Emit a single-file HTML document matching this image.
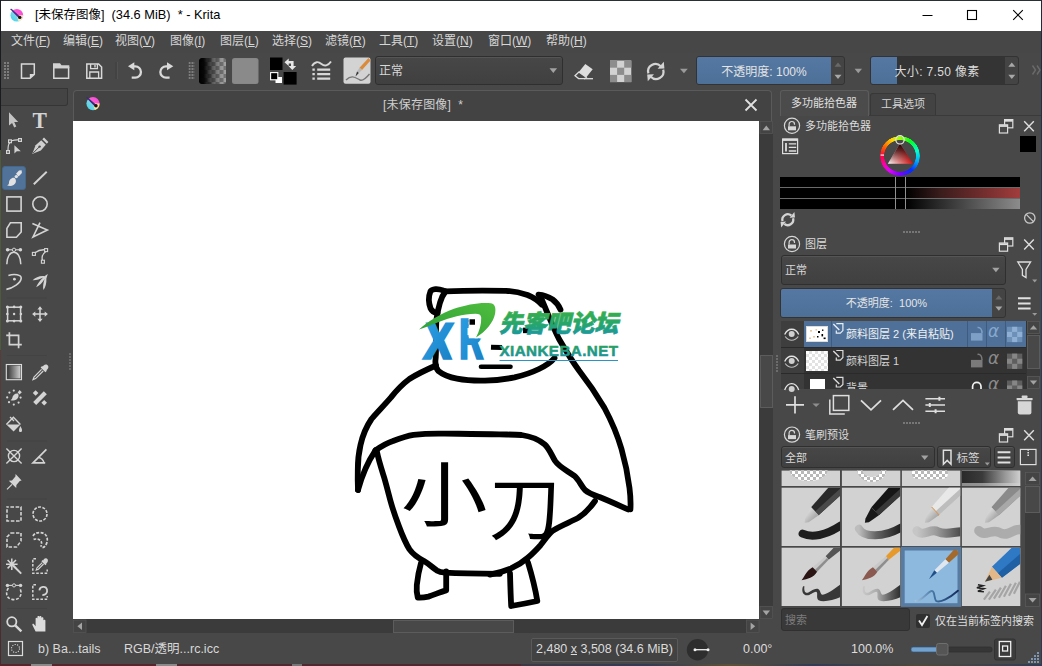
<!DOCTYPE html>
<html lang="zh-CN">
<head>
<meta charset="utf-8">
<title>Krita</title>
<style>
*{box-sizing:border-box;margin:0;padding:0}
html,body{width:1042px;height:666px;overflow:hidden;background:#3a2a2a}
body{position:relative;font-family:"Liberation Sans","Noto Sans CJK SC",sans-serif;font-size:12px;color:#d2d2d2}
.abs{position:absolute}
#win{position:absolute;left:0;top:0;width:1042px;height:666px;background:#484848;overflow:hidden}
#titlebar{position:absolute;left:1px;top:1px;width:1040px;height:30px;background:#fff;color:#000}
#title{position:absolute;left:34px;top:3px;font-size:12.5px;letter-spacing:.15px;white-space:pre;color:#000;letter-spacing:0}
#menubar{position:absolute;left:1px;top:31px;width:1040px;height:22px;background:#474747}
#menubar span{position:absolute;top:2px;line-height:16px;font-size:12px;color:#d6d6d6;white-space:nowrap}
#menubar u{text-decoration:underline;text-underline-offset:1px}
#toolbar{position:absolute;left:0;top:0;width:1042px;height:88px}
svg{position:absolute;overflow:visible}
.t{position:absolute;white-space:nowrap;line-height:16px;height:16px}
.combo{border:1px solid #2f2f2f;border-radius:3px;background:linear-gradient(#474747,#404040);box-shadow:inset 0 1px 0 #555}
</style>
</head>
<body>
<div id="win">
  <!-- TITLE BAR -->
  <div id="titlebar">
    <div id="title">[未保存图像]<span style="font-size:12.800px;letter-spacing:0">  (34.6 MiB)  * - Krita</span></div>
    <svg width="1040" height="30" viewBox="1 1 1040 30" style="left:0;top:0">
      <defs><linearGradient id="kg1" x1="0" y1="1" x2="1" y2="0"><stop offset="0" stop-color="#3ad0e8"/><stop offset=".45" stop-color="#7ad8e8"/><stop offset=".55" stop-color="#ff60d0"/><stop offset="1" stop-color="#f040e0"/></linearGradient></defs>
      <circle cx="16.800" cy="15.200" r="6.300" fill="url(#kg1)"/>
      <path d="M16.800,15.200 L23.100,15.200 A6.300,6.300 0 0 1 18.400,21.300 Z" fill="#fff4c0" opacity=".9"/>
      <path d="M10,9 L11.500,8.800 L20,16.400 L18.600,18 Z" fill="#4a2a8a"/>
      <circle cx="19.800" cy="17.400" r="1.700" fill="#151515"/>
      <path d="M922.500,15.500 H932.500" stroke="#000" stroke-width="1"/>
      <rect x="967.500" y="10.500" width="9" height="9" fill="none" stroke="#000" stroke-width="1.100"/>
      <path d="M1013.200,10.200 L1022.800,19.800 M1022.800,10.200 L1013.200,19.800" stroke="#000" stroke-width="1.100"/>
    </svg>
  </div>
  <!-- MENU BAR -->
  <div id="menubar">
    <span style="left:10px">文件(<u>F</u>)</span>
    <span style="left:62px">编辑(<u>E</u>)</span>
    <span style="left:114px">视图(<u>V</u>)</span>
    <span style="left:169px">图像(<u>I</u>)</span>
    <span style="left:219px">图层(<u>L</u>)</span>
    <span style="left:271px">选择(<u>S</u>)</span>
    <span style="left:324px">滤镜(<u>R</u>)</span>
    <span style="left:378px">工具(<u>T</u>)</span>
    <span style="left:431px">设置(<u>N</u>)</span>
    <span style="left:487px">窗口(<u>W</u>)</span>
    <span style="left:545px">帮助(<u>H</u>)</span>
  </div>
  <!-- TOOLBAR -->
  <div id="toolbar">
    <!-- combo box -->
    <div class="abs combo" style="left:375px;top:56px;width:188px;height:29px"></div>
    <div class="t" style="left:379px;top:63px;font-size:12px;color:#d8d8d8">正常</div>
    <!-- opacity slider -->
    <div class="abs" style="left:696px;top:56px;width:149px;height:29px;border:1px solid #333;border-radius:3px;background:#444"></div>
    <div class="abs" style="left:697px;top:57px;width:134px;height:27px;background:linear-gradient(#5478a3,#4d7098);border-radius:2px 0 0 2px"></div>
    <div class="t" style="left:697px;top:63.500px;width:134px;text-align:center;font-size:12px;color:#e4e4e4">不透明度: 100%</div>
    <!-- size slider -->
    <div class="abs" style="left:870px;top:56px;width:149px;height:29px;border:1px solid #333;border-radius:3px;background:#343434"></div>
    <div class="abs" style="left:871px;top:57px;width:26px;height:27px;background:linear-gradient(#5478a3,#4d7098);border-radius:2px 0 0 2px"></div>
    <div class="abs" style="left:1005px;top:57px;width:13px;height:27px;background:#444;border-radius:0 2px 2px 0"></div>
    <div class="t" style="left:894.500px;top:63.500px;font-size:12px;letter-spacing:.35px;color:#dcdcdc">大小: 7.50 像素</div>
    <svg width="1042" height="88" viewBox="0 0 1042 88" style="left:0;top:0">
      <defs>
        <pattern id="hdl" x="4" y="62" width="3" height="3" patternUnits="userSpaceOnUse"><rect x="0" y="0" width="2" height="2" fill="#7d7d7d"/></pattern>
        <pattern id="hdl2" x="188.5" y="62" width="3" height="3" patternUnits="userSpaceOnUse"><rect x="0" y="0" width="2" height="2" fill="#7d7d7d"/></pattern>
        <pattern id="chk" x="199.5" y="58" width="8" height="8" patternUnits="userSpaceOnUse"><rect width="8" height="8" fill="#a2a2a2"/><rect width="4" height="4" fill="#747474"/><rect x="4" y="4" width="4" height="4" fill="#747474"/></pattern>
        <linearGradient id="gblk" x1="0" x2="1" y1="0" y2="0"><stop offset="0" stop-color="#000" stop-opacity="1"/><stop offset=".18" stop-color="#000" stop-opacity=".95"/><stop offset=".5" stop-color="#000" stop-opacity=".45"/><stop offset=".8" stop-color="#000" stop-opacity=".1"/><stop offset="1" stop-color="#000" stop-opacity="0"/></linearGradient>
      </defs>
      <rect x="4" y="62" width="6" height="18" fill="url(#hdl)"/>
      <rect x="188.5" y="62" width="6" height="18" fill="url(#hdl2)"/>
      <g fill="none" stroke="#d9d9d9" stroke-width="1.6" stroke-linejoin="miter">
        <!-- new -->
        <path d="M21.5,64 H34.3 V74.3 L30,78.2 H21.5 Z" stroke-width="1.5"/><path d="M34.6,74 H29.8 V78.6 Z" fill="#d9d9d9" stroke="none"/>
        <!-- open -->
        <path d="M53.8,67.5 H68.6 V78.2 H53.8 Z" stroke-width="1.5"/><path d="M53,68.2 V63.2 H60 L61.5,65.2 H69.3 V68.2 Z" fill="#d2d2d2" stroke="none"/>
        <!-- save -->
        <path d="M86.8,64 H98.6 L101.6,67 V78.2 H86.8 Z" stroke-width="1.5"/><path d="M90.6,64 V68.6 H97.4 V64" stroke-width="1.3"/><path d="M95,65 V67.6" stroke-width="1.4"/><path d="M89.8,78 V72 H98.6 V78" stroke-width="1.3"/>
        <!-- undo -->
        <path d="M132.5,66.3 H135.3 A5.5,5.5 0 0 1 135.3,77.6 H131.7" stroke-width="2.3"/><path d="M128,66.2 L134.3,62.2 V70.2 Z" fill="#d9d9d9" stroke="none"/>
        <!-- redo -->
        <path d="M168.8,66.3 H166 A5.5,5.5 0 0 0 166,77.6 H169.6" stroke-width="2.3"/><path d="M173.3,66.2 L167,62.2 V70.2 Z" fill="#d9d9d9" stroke="none"/>
      </g>
      <rect x="115.5" y="62" width="1" height="17" fill="#3e3e3e"/><rect x="117" y="62" width="1" height="17" fill="#525252"/>
      <!-- gradient swatch -->
      <rect x="199" y="58" width="27" height="26" rx="2.5" fill="url(#chk)"/>
      <rect x="199" y="58" width="27" height="26" rx="2.5" fill="url(#gblk)"/>
      <!-- pattern swatch -->
      <rect x="232" y="58" width="26.5" height="26" rx="2.5" fill="#878787"/><rect x="233" y="59" width="24.500" height="24" rx="2" fill="#8c8c8c" opacity=".6"/>
      <!-- fg/bg -->
      <rect x="270" y="57.5" width="12.5" height="12.5" fill="#000"/>
      <rect x="283.6" y="72" width="13" height="12.6" fill="#000"/>
      <rect x="275.5" y="77" width="6.5" height="6" fill="#fff"/>
      <rect x="270.6" y="72.6" width="7.2" height="7.2" fill="#000" stroke="#fff" stroke-width="1.1"/>
      <g fill="#e6e6e6"><path d="M284.5,62.2 L288.7,58.4 V60.9 H293.6 V66 H296.2 L292.3,70 L288.5,66 H291 V63.5 H288.7 V66 Z"/></g>
      <!-- brush settings -->
      <g stroke="#d8d8d8" fill="none" stroke-width="2.1" stroke-linecap="butt"><path d="M312,66 C315,61 318.5,61.5 321.5,64 C324.5,66.5 328,66 331,61.5" stroke-width="1.9"/><path d="M312.4,69.6 h2.4 M317.2,69.6 H330.2 M312.4,74.1 h2.4 M317.2,74.1 H330.2 M312.4,78.6 h2.4 M317.2,78.6 H330.2"/></g>
      <!-- brush preset icon -->
      <rect x="343.5" y="57.5" width="27" height="26.2" rx="2" fill="#d3d3d3"/>
      <path d="M346,80 C352,74 356,78 360,80 C363,81.5 367,77 369.5,74" stroke="#777" stroke-width="1.4" fill="none"/>
      <path d="M368.5,58 L370.5,60.5 L362,70 L359.5,67.8 Z" fill="#d98a3a"/>
      <path d="M362,70 L359.5,67.8 L357,71.5 L358.8,73 Z" fill="#b9b9b9"/>
      <path d="M357,71.5 L358.8,73 L355.5,76.5 Z" fill="#333"/>
      <!-- combo arrow -->
      <path d="M549.5,68.3 h7.6 l-3.8,4.6z" fill="#a2a2a2"/>
      <!-- eraser -->
      <g><path d="M585.3,64 L592.7,69.3 L586.3,77.3 L578.8,72 Z" fill="#dedede"/><path d="M578.8,72 L586.3,77.3 L584.6,78.6 H578.6 L575,75.8 Z" fill="none" stroke="#dedede" stroke-width="1.3"/><path d="M584,78.7 H593" stroke="#dedede" stroke-width="1.3"/></g>
      <!-- alpha checker -->
      <g><rect x="610" y="60.5" width="21.3" height="21.6" fill="#d2d2d2"/><g fill="#8d8d8d"><rect x="610" y="60.5" width="7.1" height="7.2"/><rect x="624.2" y="60.5" width="7.1" height="7.2"/><rect x="617.1" y="67.7" width="7.1" height="7.2"/><rect x="610" y="74.9" width="7.1" height="7.2"/><rect x="624.2" y="74.9" width="7.1" height="7.2"/></g></g>
      <!-- reload -->
      <g fill="none" stroke="#d4d4d4" stroke-width="2.200"><path d="M648.400,73.400 A7.400,7.400 0 0 1 660.800,66.200"/><path d="M663.200,69.600 A7.400,7.400 0 0 1 650.800,76.800"/><path d="M657.600,68.800 L664.400,68.400 L663.800,61.800 Z" fill="#d4d4d4" stroke="none"/><path d="M654,74.200 L647.200,74.600 L647.800,81.200 Z" fill="#d4d4d4" stroke="none"/></g>
      <path d="M680,68.7 h7.8 l-3.9,4.5z" fill="#9a9a9a"/>
      <path d="M854.6,68.7 h7.4 l-3.7,4.5z" fill="#9a9a9a"/>
      <!-- spin arrows -->
      <path d="M834.5,66.8 h7 l-3.5,-4.2z" fill="#686868"/><path d="M834.5,74.7 h7 l-3.5,4.2z" fill="#a8a8a8"/>
      <path d="M1008.3,66.8 h7 l-3.5,-4.2z" fill="#a8a8a8"/><path d="M1008.3,74.7 h7 l-3.5,4.2z" fill="#a8a8a8"/>
      <!-- >> -->
      <path d="M1032.5,65.5 l3,4.5 l-3,4.5 M1037,65.5 l3,4.5 l-3,4.5" stroke="#6a6a6a" stroke-width="1.4" fill="none"/>
    </svg>
  </div>
  <!-- TOOLBOX -->
  <div id="toolbox">
    <div class="abs" style="left:1px;top:88px;width:67px;height:18px;background:#444;border:1px solid #353535;border-left:none;border-radius:0 0 3px 0"></div>
    <div class="abs" style="left:2px;top:166px;width:24px;height:24px;background:#517399;border-radius:3px;border:1px solid #46678c"></div>
    <svg width="76" height="640" viewBox="0 0 76 640" style="left:0;top:0">
      <g fill="#d0d0d0" stroke="none">
        <!-- pointer -->
        <path d="M9,112.3 V125.6 L12.1,122.9 L14.2,127.6 L16.3,126.6 L14.2,122.1 H18.2 Z" fill="#c4c4c4"/>
        <!-- T -->
        <text x="0" y="0" font-family="'Liberation Serif',serif" font-weight="700" font-size="23.500" transform="translate(32.600,127.800) scale(.920,1)" fill="#d4d4d4">T</text>
      </g>
      <!-- edit shapes -->
      <g fill="none" stroke="#d4d4d4" stroke-width="1.2"><path d="M8,150.5 C8,146 8.5,143.5 9.8,143 M11.6,140.8 C14,140 16,139.8 18.3,139.9"/><rect x="8.6" y="139.9" width="2.8" height="2.8"/><rect x="18.6" y="138.6" width="2.8" height="2.8"/><rect x="6.6" y="150.6" width="2.8" height="2.8"/></g>
      <path d="M14.4,145.3 V153.4 L16.8,151.2 H20.8 Z" fill="#d0d0d0"/>
      <!-- calligraphy nib -->
      <g fill="#d0d0d0"><path d="M32.2,154 L35.6,145.2 L41.2,140.2 L45.8,144.8 L40.8,150.4 Z"/><path d="M42.3,139.2 L44,137.5 L48.4,142 L46.8,143.7 Z"/></g>
      <path d="M33,153.2 L39.2,147" stroke="#494949" stroke-width="1"/><circle cx="39.6" cy="146.6" r="1.2" fill="#494949"/>
      <!-- brush (active) -->
      <g fill="#e2e2e2"><path d="M21.6,170.2 L21.9,173 L18.6,176.4 L16,173.8 L19,170.6 Z"/><circle cx="16.3" cy="176.6" r="1.7"/><path d="M14.6,178 C16.8,180.2 16.2,183.4 13.6,185 C11.4,186.3 8.8,186 7.2,185.4 C8.6,184.8 9,184 9,182.6 C9,180 11.8,177.2 14.6,178 Z"/></g>
      <!-- line -->
      <path d="M33.8,184.2 L46.7,171.7" stroke="#d2d2d2" stroke-width="1.9"/>
      <g fill="none" stroke="#d4d4d4" stroke-width="1.6">
        <rect x="6.9" y="196.9" width="14.2" height="14.2"/>
        <circle cx="40" cy="204" r="7.2"/>
        <path d="M10.4,222.8 H21.2 V232 L16.4,237.2 H6.9 V228.4 Z"/>
        <path d="M40,222.6 L33,237 L47.4,230 L32.4,223.4"/>
      </g>
      <!-- bezier -->
      <g fill="none" stroke="#d4d4d4" stroke-width="1.5"><path d="M6.8,264.2 C6.8,248.4 20.8,248.4 20.8,264.2"/><path d="M7.6,249.8 H20.4" stroke-width="1.1"/></g>
      <circle cx="7.6" cy="249.8" r="1.8" fill="#d4d4d4"/><circle cx="20.4" cy="249.8" r="1.8" fill="#d4d4d4"/><circle cx="14" cy="249.8" r="1.7" fill="#494949" stroke="#d4d4d4" stroke-width="1"/>
      <!-- freehand path nodes -->
      <g fill="none" stroke="#d4d4d4" stroke-width="1.3"><path d="M35.4,252.6 C38,250.4 41,249.6 44.4,249.8 M45.6,251.8 C42.4,254 41.6,257 42.4,260"/><rect x="32.4" y="252.4" width="3" height="3" stroke-width="1.1"/><rect x="44.6" y="248.6" width="3" height="3" stroke-width="1.1"/><rect x="41.4" y="260.2" width="3" height="3" stroke-width="1.1"/></g>
      <!-- freehand -->
      <path d="M8.4,275.4 C14,273.6 21.6,274.4 21.2,278.4 C20.8,283 13,288 6.4,289.4" fill="none" stroke="#d4d4d4" stroke-width="1.6"/><circle cx="14.4" cy="279.2" r="1.4" fill="#d4d4d4"/>
      <!-- multibrush -->
      <g fill="#d4d4d4"><path d="M47.8,274 L44.4,276.2 C40,275.6 35.4,277.4 32.6,280.2 C36,280.4 40,279.4 43.2,277.6 C40,280.4 37,284.6 36.2,287.2 C39.4,285.8 42.6,282.6 44.6,279 C43.4,282.8 42.6,286.6 43.4,290 C45.6,287.4 46.6,283 46.4,278.4 Z"/></g>
      <rect x="7" y="297.5" width="40" height="1" fill="#434343"/>
      <!-- transform -->
      <g fill="none" stroke="#d4d4d4"><rect x="7.6" y="307.2" width="13" height="13.6" stroke-width="1.5"/></g>
      <g fill="#d4d4d4"><circle cx="7.4" cy="307" r="1.5"/><circle cx="20.8" cy="307" r="1.5"/><circle cx="7.4" cy="321" r="1.5"/><circle cx="20.8" cy="321" r="1.5"/><circle cx="14.1" cy="306.9" r="1.3"/><circle cx="14.1" cy="321.1" r="1.3"/><circle cx="7.3" cy="314" r="1.3"/><circle cx="20.9" cy="314" r="1.3"/><circle cx="14.1" cy="314" r="1.2"/></g>
      <!-- move -->
      <g stroke="#d4d4d4" stroke-width="1.5" fill="#d4d4d4"><path d="M40,308.6 V319.6 M34.6,314.1 H45.4" fill="none"/><path d="M40,306.2 L42.6,309.4 H37.4 Z M40,322 L42.6,318.8 H37.4 Z M32.1,314.1 L35.3,311.5 V316.7 Z M47.9,314.1 L44.7,311.5 V316.7 Z" stroke="none"/></g>
      <!-- crop -->
      <g fill="none" stroke="#d4d4d4" stroke-width="1.7"><path d="M6.2,335.4 H18.6 V348.2"/><path d="M9.4,332.2 V344.6 H21.8"/></g>
      <rect x="7" y="355" width="40" height="1" fill="#434343"/>
      <!-- gradient tool -->
      <defs><linearGradient id="tg" x1="0" x2="1"><stop offset="0" stop-color="#3a3a3a"/><stop offset="1" stop-color="#cfcfcf"/></linearGradient></defs>
      <rect x="7.6" y="365.6" width="12.8" height="12.8" fill="url(#tg)"/><rect x="6.3" y="364.5" width="15.2" height="15.2" fill="none" stroke="#dcdcdc" stroke-width="1.1"/>
      <!-- color picker -->
      <g><path d="M43.6,365.4 C45.2,363.8 47.6,364.2 48.2,366 C48.8,367.6 48,369.2 46.4,370.2 L46.9,370.8 L45.4,372.3 L40.6,367.6 L42.1,366.1 L42.7,366.6 Z" fill="#d4d4d4"/><path d="M41.6,369.4 L34,377 L33,379.6 L35.6,378.6 L43.2,371" fill="none" stroke="#d4d4d4" stroke-width="1.2"/></g>
      <!-- colorize mask -->
      <g fill="#d4d4d4"><path d="M19.6,390 L21.8,392.2 L19.6,394.4 L17.6,392.4 Z"/><path d="M17.8,393.6 C19.4,395.4 18.4,398.2 16.4,399.6 C14.4,401 12,400.6 10.6,400.2 C11.8,399.6 12.2,398.8 12.4,397.6 C12.8,395.2 15.4,393 17.8,393.6 Z"/><circle cx="13.8" cy="390.6" r="1.1"/><circle cx="9.4" cy="392.6" r="1.1"/><circle cx="7.2" cy="397.4" r="1.1"/><circle cx="9" cy="402.2" r="1.1"/><circle cx="13.8" cy="404.6" r="1.1"/><circle cx="18.6" cy="402.6" r="1.1"/><circle cx="20.6" cy="397.6" r="1.1"/></g>
      <!-- smart patch -->
      <g fill="#d4d4d4"><path d="M33.2,402 L43.8,391.2 L46.8,394.2 L36.2,405 Z"/><path d="M35.6,390.2 L38.4,393 L35.6,395.8 L32.8,393 Z"/><path d="M44.2,400 L47,402.8 L44.2,405.6 L41.4,402.8 Z"/></g>
      <!-- fill bucket -->
      <g fill="#d4d4d4"><path d="M6.4,424.4 L13.6,431.6 L20.4,424.4 Z"/><path d="M6.4,424.4 L13.4,417.2 L20.4,424.4" fill="none" stroke="#d4d4d4" stroke-width="1.4"/><path d="M10,417 L14,421" stroke="#d4d4d4" stroke-width="1.2"/><path d="M20.4,426 C21.6,428 22,429.4 22,430.4 C22,431.4 21.2,432 20.4,432 C19.6,432 19,431.4 19,430.4 C19,429.4 19.4,428 20.4,426 Z"/></g>
      <rect x="7" y="440.5" width="40" height="1" fill="#434343"/>
      <!-- assistants -->
      <g fill="none" stroke="#d4d4d4" stroke-width="1.4"><circle cx="14" cy="456" r="5.6"/><path d="M6.4,448.4 L21.6,463.6 M21.6,448.4 L6.4,463.6"/></g>
      <!-- measure -->
      <g fill="none" stroke="#d4d4d4" stroke-width="1.7"><path d="M46.4,449.4 L33,462.8 H45.2"/><path d="M38.4,457.2 C41.4,458 43.4,460 44,462.8" stroke-width="1.4"/></g>
      <!-- pin -->
      <g fill="#d4d4d4"><path d="M15.6,474 L21.6,480.6 L19.8,481 L16.4,485 L16.2,488 L8.8,480.8 L12,480.4 L15.4,476.6 Z"/><path d="M12,484.4 L7,489.4" stroke="#d4d4d4" stroke-width="1.2"/></g>
      <rect x="7" y="498.5" width="40" height="1" fill="#434343"/>
      <!-- selections -->
      <g fill="none" stroke="#d4d4d4" stroke-width="1.6">
        <rect x="7" y="507" width="14" height="14" stroke-dasharray="3.6 1.6" stroke-dashoffset="1.8"/>
        <circle cx="40" cy="514" r="7" stroke-dasharray="3 1.4"/>
        <path d="M11,533 H21 V541 L16.6,547 H7 V537 Z" stroke-dasharray="3.4 1.6"/>
        <path d="M33,536 C35,532.4 40,531.6 44,533.6 C47.4,535.4 48,539.6 46.6,543.4 C45.6,546 44,547.4 42.4,547.6" stroke-dasharray="3 1.4" stroke-width="1.7"/>
        <path d="M33.6,539.4 C36.6,538.4 40.4,539.4 41.4,542 C41.8,543.4 41.6,545.4 40.6,546.6" stroke-dasharray="2.6 1.4" stroke-width="1.7"/>
      </g>
      <!-- magic wand -->
      <g stroke="#d4d4d4" fill="none"><path d="M11.8,558.4 V570 M6,564.2 H17.6 M7.6,560 L16,568.4 M16,560 L7.6,568.4" stroke-width="1.5"/><path d="M13.4,565.8 L21.2,573.6" stroke-width="2"/></g>
      <!-- similar color select -->
      <g fill="none" stroke="#d4d4d4" stroke-width="1.5"><path d="M36,558.8 H32.8 V573.2 H47.2 V569.4" stroke-dasharray="2.6 1.6"/></g>
      <g><path d="M43.8,559.2 C45.2,557.8 47.2,558.2 47.8,559.8 C48.2,561.2 47.6,562.6 46.2,563.4 L46.6,564 L45.4,565.2 L41.4,561.2 L42.6,560 L43.2,560.4 Z" fill="#d4d4d4"/><path d="M42.2,562.6 L37,567.8 L36.2,570 L38.4,569.2 L43.6,564" fill="none" stroke="#d4d4d4" stroke-width="1.1"/></g>
      <!-- bezier select -->
      <g fill="none" stroke="#d4d4d4" stroke-width="1.6"><path d="M8.4,588 C5,593 6.6,598.4 12,599.4 C17,600.4 21.6,597.4 21,592 C20.8,590.4 20.2,589 19.6,588" stroke-dasharray="3 1.6"/><path d="M7.4,585.4 H20.6" stroke-width="1.1"/></g>
      <circle cx="7.4" cy="585.4" r="1.7" fill="#d4d4d4"/><circle cx="20.6" cy="585.4" r="1.7" fill="#d4d4d4"/><circle cx="14" cy="585.4" r="1.6" fill="#494949" stroke="#d4d4d4" stroke-width="1"/>
      <!-- magnetic select -->
      <g fill="none" stroke="#d4d4d4" stroke-width="1.5"><path d="M36,584.8 H32.8 V599.2 H47.2 V596" stroke-dasharray="2.6 1.6"/><path d="M39.4,590.4 C39.8,586.4 45.8,585.4 47,589.6 C47.8,592.8 45.4,595.2 42.4,595" stroke-width="1.8"/></g>
      <rect x="7" y="608" width="40" height="1" fill="#434343"/>
      <!-- zoom -->
      <g fill="none" stroke="#d8d8d8"><circle cx="11.8" cy="621.8" r="4.6" stroke-width="1.8"/><path d="M15.2,625.4 L21.4,631.4" stroke-width="2.4"/></g>
      <!-- hand -->
      <path d="M35.6,631.6 L32.4,625 C32,624 33.2,623.2 34,624.2 L35.6,626.2 V618.6 C35.6,617.4 37.4,617.4 37.4,618.6 V622.8 V617 C37.4,615.8 39.4,615.8 39.4,617 V622.6 V616.8 C39.400,615.600 41.400,615.600 41.400,616.800 V622.8 V618.2 C41.4,617 43.4,617 43.4,618.200 V623.4 V620.6 C43.4,619.400 45.4,619.400 45.4,620.600 V631.6 Z" fill="#dcdcdc"/>
      <!-- splitter dots -->
      <g fill="#6a6a6a"><rect x="69" y="353" width="2" height="2"/><rect x="69" y="356" width="2" height="2"/><rect x="69" y="359" width="2" height="2"/><rect x="69" y="362" width="2" height="2"/><rect x="69" y="365" width="2" height="2"/><rect x="69" y="368" width="2" height="2"/></g>
    </svg>
  </div>
  <!-- DOC AREA -->
  <div id="doc">
    <!-- doc tab -->
    <div class="abs" style="left:73px;top:90px;width:699px;height:32px;background:#434343;border:1px solid #5a5a5a;border-bottom:none;border-radius:4px 4px 0 0"></div>
    <div class="t" style="left:383px;top:97px;font-size:12px;letter-spacing:.2px;color:#cfcfcf;white-space:pre">[未保存图像]  *</div>
    <!-- canvas -->
    <div class="abs" style="left:73px;top:121px;width:686px;height:498px;background:#fff"></div>
    <!-- v scrollbar -->
    <div class="abs" style="left:759px;top:121px;width:14px;height:498px;background:#3b3b3b"></div>
    <div class="abs" style="left:760px;top:355px;width:13px;height:53px;background:#484848;border:1px solid #5c5c5c"></div>
    <!-- h scrollbar -->
    <div class="abs" style="left:73px;top:619px;width:686px;height:14px;background:#3b3b3b"></div>
    <div class="abs" style="left:393px;top:620px;width:121px;height:13px;background:#484848;border:1px solid #5c5c5c"></div>
    <svg width="1042" height="666" viewBox="0 0 1042 666" style="left:0;top:0">
      <defs>
        <linearGradient id="wg" x1="0" y1="0" x2="0" y2="1"><stop offset="0" stop-color="#3fb43a"/><stop offset=".55" stop-color="#27a66a"/><stop offset="1" stop-color="#1793b4"/></linearGradient>
        <linearGradient id="wg2" x1="0" y1="0" x2="0" y2="1"><stop offset="0" stop-color="#2ea64e"/><stop offset="1" stop-color="#1a8fa8"/></linearGradient>
        <linearGradient id="sw" x1="0" y1="1" x2="1" y2="0"><stop offset="0" stop-color="#2c9d3a"/><stop offset="1" stop-color="#4fbd3c"/></linearGradient>
        <clipPath id="rclip"><path d="M455,312 H468.600 V338.500 H492 V364 H455 Z"/></clipPath>
        <linearGradient id="xb" x1="0" y1="0" x2="1" y2="1"><stop offset="0" stop-color="#2aa0e6"/><stop offset="1" stop-color="#1b7fc4"/></linearGradient>
      </defs>
      <!-- krita doc icon -->
      <g id="kicon"><circle cx="93" cy="103.600" r="6.600" fill="url(#kg1)"/><path d="M93,103.600 L99.600,103.600 A6.600,6.600 0 0 1 94.800,110 Z" fill="#ffe890" opacity=".95"/><path d="M86,97.400 L87.500,97.200 L96.200,104.800 L94.800,106.400 Z" fill="#3a2a7a"/><circle cx="96" cy="105.800" r="1.700" fill="#151515"/></g>
      <!-- close x -->
      <path d="M745.5,99.5 L756.5,110.5 M756.5,99.5 L745.5,110.500" stroke="#e0e0e0" stroke-width="1.8"/>
      <!-- scroll arrows -->
      <rect x="760" y="121.500" width="12.5" height="12" fill="#444" stroke="#555" stroke-width=".8"/><path d="M762.6,130.2 h7.4 l-3.7,-4.600z" fill="#a4a4a4"/>
      <rect x="760" y="606.5" width="12.5" height="12" fill="#444" stroke="#555" stroke-width=".8"/><path d="M762.6,610.6 h7.4 l-3.7,4.600z" fill="#a4a4a4"/>
      <rect x="73.5" y="620" width="12.5" height="12.5" fill="#444" stroke="#555" stroke-width=".8"/><path d="M82,622.600 v7.400 l-4.600,-3.700z" fill="#a4a4a4"/>
      <rect x="746.500" y="620" width="12.5" height="12.5" fill="#444" stroke="#555" stroke-width=".8"/><path d="M750.6,622.600 v7.400 l4.600,-3.700z" fill="#a4a4a4"/>
      <!-- splitter dots right of vscroll -->
      <g fill="#6c6c6c"><rect x="776" y="355" width="2" height="2"/><rect x="776" y="358" width="2" height="2"/><rect x="776" y="361" width="2" height="2"/><rect x="776" y="364" width="2" height="2"/><rect x="776" y="367" width="2" height="2"/><rect x="776" y="370" width="2" height="2"/></g>
      <!-- DRAWING -->
      <g id="drawing" fill="none" stroke="#000" stroke-width="5.800" stroke-linecap="round" stroke-linejoin="round">
        <!-- head -->
        <path d="M443,290.4 C438,288.400 432,288.6 430.4,291.500 C428.6,296 428.600,303 430.6,308.500 C432,311.400 434.500,312.600 437.400,313"/>
        <path d="M445.500,291.400 C441,297 438,308 436.400,320 C435.400,335 436.800,350 435.400,361 C435.200,365.600 436.400,368.800 438.400,371 C444,375.600 450,377.400 457,378.600 C466,380.400 476,380.800 485,380.600 C496,380.400 506,379 514.500,377.400 C524,375.200 532,372.400 539,369 C546,365.600 551,362.400 554.500,358"/>
        <path d="M445.500,291.400 C465,290.400 487,290.400 506,290.800 C514,291.200 521,292.800 527.500,295 C533.500,297.400 538.500,300.800 542,304.800"/>
        <path d="M538.500,294.600 C543.500,295 548.500,296.800 552.500,299.400 C556.500,302.400 559,306 560.500,309.600"/>
        <!-- face -->
        <path d="M469.500,322 H475" stroke-linecap="butt" stroke-width="5.5"/>
        <path d="M523,330.400 H530" stroke-linecap="butt" stroke-width="5.5"/>
        <path d="M491,347.200 L502,347.600" stroke-linecap="butt" stroke-width="5"/>
        <path d="M481,366.800 H510.500" stroke-width="4.600"/>
        <!-- right arm / cape outer -->
        <path d="M540.500,296.600 C546,309 552,325 559,339 C566,351 572,361 579,370.500 C588,382 598,397 604.500,408 C612,422 618,437 621.500,449 C625.500,463 628,476 629.500,488 C630.500,496 630.800,503 630.400,509.400"/>
        <!-- left arm -->
        <path d="M436,365.500 C428,369 418,373.500 409.400,379 C402,384.500 396,391 391,397.400 C384,405.500 376.500,413 371.500,419 C366,427 362.500,436 360.500,445 C358.500,453.500 357.800,462 357.800,470 C357.600,478 357.800,485 358,490"/>
        <path d="M358,490 C361,479 367,463 375.500,450.400"/>
        <!-- body top -->
        <path d="M375.500,450.400 C381,446.500 387,443 393,441 C399.500,438.500 406,436 413.500,434.800 C424,433.600 435,433.400 445,433.600 C463,433.800 481,433.800 499.500,434.400 C507,434.600 515,434.400 521.500,435 C530,436.200 538.500,439.400 544.500,444.200 C549,448 551,454 555,460.800 C559,467 567.500,470.800 574,475.600 C579,479.600 581,485.800 585,490 C589,493.600 594,495.200 599.500,497 C609,500.800 619,505.400 628,509.400"/>
        <!-- body left + bottom -->
        <path d="M376.800,451 C378.500,460 381.500,469 384.200,477.600 C386.500,485.500 388.500,493.500 390.500,501 C393,510 396,518.500 399,526.400 C402,534.500 405.500,543 409.500,549.400 C413.500,555 419,558.400 424,561 C428.500,563.600 432.500,567.400 436.800,570.400 C439.500,572 442,572.400 445,572.600 C463,573.400 481,573.600 499.800,573.800"/>
        <path d="M490,574.600 C497.500,573.200 504.500,571 511,568.400 C517,565.800 523,562 527.800,557.800 C532.500,553.800 536.500,549.600 540.500,545.200 C544.500,540.400 548,534.600 553,530.600 C560.500,525.600 570.500,522 578.300,517.800 C585,513.600 590.500,507.400 595,501"/>
        <!-- left foot -->
        <path d="M421,563 C419,570 417.500,578 416.800,585 C416.400,589.500 416.800,594 417.800,597.600 C421.500,597.800 425,597.400 428.400,596.600 C434.500,594.800 440.500,591.800 446.200,590.400 V571.500"/>
        <!-- right foot -->
        <path d="M510,573.500 C510.300,584 510.600,595 511.200,606 C520,604.500 529,602.800 537.300,601 C535.200,588 531.800,575 528,562.500"/>
      </g>
      <!-- 小刀 hand-written on the body -->
      <g font-family="'Noto Sans CJK SC','WenQuanYi Zen Hei',sans-serif" fill="#000">
        <text id="xiaodao" transform="scale(1.060,.860)"><tspan x="378" y="605.800" font-size="82">小</tspan><tspan x="461" y="621.500" font-size="80" textLength="68" lengthAdjust="spacingAndGlyphs">刀</tspan></text>
      </g>
      <!-- WATERMARK -->
      <g id="wm">
        
        <g font-family="'Liberation Sans',sans-serif" font-weight="700" fill="url(#xb)" stroke="url(#xb)" stroke-linejoin="miter">
          <text x="0" y="0" font-size="48" stroke-width="3.6" transform="translate(424,357.600) scale(.820,1.020) skewX(-6)" >X</text>
          <g clip-path="url(#rclip)"><text x="0" y="0" font-size="54" stroke-width="3.400" transform="translate(459.500,357.600) scale(.600,1.020)">R</text></g>
        </g>
        <path d="M419,329.600 C428,321.500 440,314 454,308.800 C467,304.200 481,302 491,303.200 C495.500,304 496,309 495,314 C493.500,322 486,331.500 476,337.400 C479.500,331 481.500,324 481.200,317.400 C481,314.800 479,313.800 475.500,313.800 C463,314 450,317.500 439.500,321.800 C431.500,325 424.500,327.800 419,329.600 Z" fill="url(#sw)"/>
        <text x="499" y="332.400" font-family="'Noto Sans CJK SC',sans-serif" font-weight="900" font-style="italic" font-size="24" fill="url(#wg)" stroke="url(#wg)" stroke-width=".7" textLength="119" lengthAdjust="spacingAndGlyphs">先客吧论坛</text>
        <text x="499.500" y="356" font-family="'Liberation Sans',sans-serif" font-weight="700" font-size="15.200" fill="url(#wg2)" stroke="url(#wg2)" stroke-width=".5" textLength="118.500" lengthAdjust="spacing">XIANKEBA.NET</text>
        <rect x="499.500" y="360" width="118.500" height="1" fill="#2a94c4"/>
      </g>
    </svg>
  </div>
  <!-- RIGHT DOCK -->
  <div id="dock" style="font-size:11px">
    <!-- tabs -->
    <div class="abs" style="left:870px;top:93px;width:66px;height:23px;background:#434343;border:1px solid #383838;border-bottom:none;border-radius:3px 3px 0 0"></div>
    <div class="abs" style="left:780px;top:90px;width:89px;height:26px;background:#4b4b4b;border:1px solid #5c5c5c;border-bottom:none;border-radius:3px 3px 0 0"></div>
    <div class="abs" style="left:869px;top:115px;width:172px;height:1px;background:#3a3a3a"></div>
    <div class="t" style="left:791px;top:95.300px;color:#e0e0e0">多功能拾色器</div>
    <div class="t" style="left:881px;top:96.400px;color:#d4d4d4">工具选项</div>
    <!-- color selector docker -->
    <div class="t" style="left:805px;top:118.300px;color:#dcdcdc">多功能拾色器</div>
    <div class="abs" style="left:1020px;top:136px;width:16px;height:16px;background:#000"></div>
    <div class="abs" style="left:780px;top:177px;width:240px;height:32px;background:#000"></div>
    <div class="abs" style="left:906px;top:188px;width:114px;height:10px;background:linear-gradient(90deg,#000,#3a1c1c 30%,#a23c3c)"></div>
    <div class="abs" style="left:906px;top:199px;width:114px;height:10px;background:linear-gradient(90deg,#000,#2c2c2c 30%,#8c8c8c)"></div>
    <div class="abs" style="left:780px;top:187px;width:240px;height:1px;background:#6a6a6a"></div>
    <div class="abs" style="left:780px;top:198px;width:240px;height:1px;background:#6a6a6a"></div>
    <div class="abs" style="left:895px;top:177px;width:1.400px;height:32px;background:#909090"></div>
    <div class="abs" style="left:904.800px;top:177px;width:1.400px;height:32px;background:#909090"></div>
    <div class="abs" style="left:880px;top:136px;width:40px;height:40px;border-radius:50%;background:conic-gradient(from 0deg,#9aff00,#00ff20 35deg,#00ffd0 75deg,#00b0ff 105deg,#0030ff 140deg,#7a00ff 180deg,#e000ff 215deg,#ff00a0 245deg,#ff0040 270deg,#ff6000 300deg,#ffd800 335deg,#9aff00 360deg);-webkit-mask:radial-gradient(circle,transparent 15.600px,#000 16.200px,#000 19.600px,transparent 20.200px);mask:radial-gradient(circle,transparent 15.600px,#000 16.200px,#000 19.600px,transparent 20.200px)"></div>
    <!-- layers docker -->
    <div class="t" style="left:805px;top:236px;color:#dcdcdc">图层</div>
    <div class="abs combo" style="left:781px;top:255px;width:225px;height:30px"></div>
    <div class="t" style="left:785px;top:261.800px;color:#d8d8d8">正常</div>
    <div class="abs" style="left:780px;top:288px;width:226px;height:30px;border:1px solid #333;border-radius:3px;background:#444"></div>
    <div class="abs" style="left:781px;top:289px;width:211px;height:28px;background:linear-gradient(#5478a3,#4d7098);border-radius:2px 0 0 2px"></div>
    <div class="t" style="left:781px;top:295px;width:211px;text-align:center;color:#e4e4e4;white-space:pre">不透明度:  100%</div>
    <!-- layer list -->
    <div class="abs" style="left:781px;top:321px;width:246px;height:68px;background:#333"></div>
    <div class="abs" style="left:781px;top:321px;width:23px;height:68px;background:#3e3e3e"></div>
    <div class="abs" style="left:804px;top:321px;width:222px;height:26px;background:#4e7099"></div>
    <div class="abs" style="left:781px;top:347px;width:245px;height:1px;background:#2a2a2a"></div>
    <div class="abs" style="left:781px;top:373px;width:245px;height:1px;background:#2a2a2a"></div>
    <div class="abs" style="left:831px;top:321px;width:1px;height:26px;background:#3d5c80"></div>
    <div class="abs" style="left:967px;top:321px;width:1px;height:26px;background:#3d5c80"></div>
    <div class="abs" style="left:986px;top:321px;width:1px;height:26px;background:#3d5c80"></div>
    <div class="abs" style="left:1005px;top:321px;width:1px;height:26px;background:#3d5c80"></div>
    <div class="t" style="left:846px;top:326px;color:#f0f0f0">颜料图层 2 (来自粘贴)</div>
    <div class="t" style="left:846px;top:353px;color:#d4d4d4">颜料图层 1</div>
    <div class="t" style="left:846px;top:380px;color:#d4d4d4;height:9px;overflow:hidden">背景</div>
    <div class="t" style="left:988px;top:323px;font-size:17px;font-style:italic;color:#86a8cc;font-family:'DejaVu Sans','Liberation Sans',sans-serif">α</div>
    <div class="t" style="left:988px;top:350px;font-size:17px;font-style:italic;color:#8a8a8a;font-family:'DejaVu Sans','Liberation Sans',sans-serif">α</div>
    <div class="t" style="left:988px;top:376px;font-size:17px;font-style:italic;color:#8a8a8a;height:13px;overflow:hidden;font-family:'DejaVu Sans','Liberation Sans',sans-serif">α</div>
    <!-- thumbnails -->
    <div class="abs" style="left:806px;top:326px;width:22px;height:16px;background:#fff;border:1px solid #ddd"></div>
    <div class="abs" style="left:806px;top:351px;width:22px;height:20px;background:#fff;background-image:linear-gradient(45deg,#e2e2e2 25%,transparent 25%,transparent 75%,#e2e2e2 75%),linear-gradient(45deg,#e2e2e2 25%,transparent 25%,transparent 75%,#e2e2e2 75%);background-size:6px 6px;background-position:0 0,3px 3px"></div>
    <div class="abs" style="left:810px;top:379px;width:15px;height:10px;background:#fff"></div>
    <!-- layer scrollbar -->
    <div class="abs" style="left:1027px;top:321px;width:13px;height:68px;background:#3b3b3b"></div>
    <div class="abs" style="left:1027px;top:335px;width:13px;height:34px;background:#484848;border:1px solid #5c5c5c"></div>
    <!-- brush presets docker -->
    <div class="t" style="left:805px;top:426.500px;color:#dcdcdc">笔刷预设</div>
    <div class="abs combo" style="left:781px;top:446px;width:154px;height:22px"></div>
    <div class="t" style="left:785px;top:450.400px;color:#d8d8d8">全部</div>
    <div class="abs combo" style="left:937px;top:446px;width:54px;height:22px"></div>
    <div class="t" style="left:956.500px;top:450px;color:#d8d8d8;font-size:11.500px">标签</div>
    <div class="abs combo" style="left:994px;top:446px;width:21px;height:22px"></div>
    <!-- preset grid -->
    <div id="grid"><svg width="1042" height="666" viewBox="0 0 1042 666" style="left:0;top:0"><defs>
<pattern id="pchk" width="6" height="6" patternUnits="userSpaceOnUse"><rect width="6" height="6" fill="#fff"/><rect width="3" height="3" fill="#b8b8b8"/><rect x="3" y="3" width="3" height="3" fill="#b8b8b8"/></pattern>
<linearGradient id="softblk" x1="0" x2="1"><stop offset="0" stop-color="#2a2a2a"/><stop offset=".35" stop-color="#3a3a3a"/><stop offset=".75" stop-color="#9a9a9a"/><stop offset="1" stop-color="#cfcfcf"/></linearGradient>
<linearGradient id="fade1" x1="0" x2="1"><stop offset="0" stop-color="#bdbdbd"/><stop offset=".4" stop-color="#666"/><stop offset="1" stop-color="#1e1e1e"/></linearGradient>
<linearGradient id="fade2" x1="0" x2="1"><stop offset="0" stop-color="#c6c6c6"/><stop offset=".45" stop-color="#9a9a9a"/><stop offset="1" stop-color="#4a4a4a"/></linearGradient>
<linearGradient id="fade3" x1="0" x2="1"><stop offset="0" stop-color="#c9c9c9"/><stop offset=".4" stop-color="#aaa"/><stop offset=".7" stop-color="#666"/><stop offset="1" stop-color="#2e2e2e"/></linearGradient><linearGradient id="fade4" x1="0" x2="1"><stop offset="0" stop-color="#9fc0dc"/><stop offset=".45" stop-color="#41709f"/><stop offset="1" stop-color="#142a5c"/></linearGradient><linearGradient id="silver" x1="0" y1="0" x2="1" y2="1"><stop offset="0" stop-color="#f4f4f4"/><stop offset="1" stop-color="#8a8a8a"/></linearGradient>
<clipPath id="gridclip"><rect x="781" y="470.600" width="240" height="135.400"/></clipPath>
<clipPath id="cc00"><rect x="781.6" y="470.6" width="58.4" height="15.4"/></clipPath>
<clipPath id="cc01"><rect x="841.9" y="470.6" width="58.4" height="15.4"/></clipPath>
<clipPath id="cc02"><rect x="901.9" y="470.6" width="58.4" height="15.4"/></clipPath>
<clipPath id="cc03"><rect x="961.9" y="470.6" width="58.4" height="15.4"/></clipPath>
<clipPath id="cc10"><rect x="781.6" y="487.7" width="58.4" height="58.3"/></clipPath>
<clipPath id="cc11"><rect x="841.9" y="487.7" width="58.4" height="58.3"/></clipPath>
<clipPath id="cc12"><rect x="901.9" y="487.7" width="58.4" height="58.3"/></clipPath>
<clipPath id="cc13"><rect x="961.9" y="487.7" width="58.4" height="58.3"/></clipPath>
<clipPath id="cc20"><rect x="781.6" y="547.7" width="58.4" height="58.3"/></clipPath>
<clipPath id="cc21"><rect x="841.9" y="547.7" width="58.4" height="58.3"/></clipPath>
<clipPath id="cc22"><rect x="901.9" y="547.7" width="58.4" height="58.3"/></clipPath>
<clipPath id="cc23"><rect x="961.9" y="547.7" width="58.4" height="58.3"/></clipPath>
</defs>
<rect x="781.6" y="470.6" width="58.4" height="15.4" fill="#d2d2d2"/>
<rect x="841.9" y="470.6" width="58.4" height="15.4" fill="#d2d2d2"/>
<rect x="901.9" y="470.6" width="58.4" height="15.4" fill="#d2d2d2"/>
<rect x="961.9" y="470.6" width="58.4" height="15.4" fill="#d2d2d2"/>
<rect x="781.6" y="487.7" width="58.4" height="58.3" fill="#d2d2d2"/>
<rect x="841.9" y="487.7" width="58.4" height="58.3" fill="#d2d2d2"/>
<rect x="901.9" y="487.7" width="58.4" height="58.3" fill="#d2d2d2"/>
<rect x="961.9" y="487.7" width="58.4" height="58.3" fill="#d2d2d2"/>
<rect x="781.6" y="547.7" width="58.4" height="58.3" fill="#d2d2d2"/>
<rect x="841.9" y="547.7" width="58.4" height="58.3" fill="#d2d2d2"/>
<rect x="901.0" y="546.8000000000001" width="60.199999999999996" height="60.099999999999994" fill="#587ba2"/><rect x="904.6999999999999" y="550.5" width="52.8" height="52.699999999999996" fill="#8cb9dd"/>
<rect x="961.9" y="547.7" width="58.4" height="58.3" fill="#d2d2d2"/>
<g clip-path="url(#cc00)"><ellipse cx="808.6" cy="470" rx="19" ry="11" fill="url(#pchk)"/></g>
<g clip-path="url(#cc01)"><path d="M859.9,470 a12,9.500 0 0 0 24,0" fill="none" stroke="url(#pchk)" stroke-width="5"/></g>
<g clip-path="url(#cc02)"><rect x="911.9" y="468" width="36" height="11" rx="5" fill="url(#pchk)"/></g>
<g clip-path="url(#cc03)"><rect x="961.9" y="470.600" width="58.4" height="15.400" fill="url(#softblk)"/><rect x="961.9" y="483" width="58.4" height="3" fill="#d2d2d2" opacity=".6"/></g>
<g clip-path="url(#cc10)"><path d="M840.0,481.7 L840.0,495.7 L818.6,515.2 L811.1,507.2 L833.6,481.7 Z" fill="#2a2a2a"/><path d="M840.0,488.7 L840.0,495.7 L818.6,515.2 L815.1,511.5 Z" fill="#4a4a4a"/><path d="M811.1,507.2 L818.6,515.2 L808.6,522.2 L804.6,522.7 L805.1,518.7 Z" fill="url(#silver)"/><path d="M802.6,533.7 C811.6,537.7 825.6,535.7 840.6,525.7" fill="none" stroke="#1e1e1e" stroke-width="8" stroke-linecap="round"/></g>
<g clip-path="url(#cc11)"><path d="M900.3,481.7 L900.3,495.7 L878.9,515.2 L871.4,507.2 L893.9,481.7 Z" fill="#161616"/><path d="M900.3,488.7 L900.3,495.7 L878.9,515.2 L875.4,511.5 Z" fill="#383838"/><path d="M871.4,507.2 L878.9,515.2 L868.9,522.2 L864.9,522.7 L865.4,518.7 Z" fill="#1a1a1a"/><path d="M858.9,528.7 C863.9,537.7 883.9,537.7 900.9,527.7" fill="none" stroke="url(#fade1)" stroke-width="8" stroke-linecap="round"/></g>
<g clip-path="url(#cc12)"><path d="M960.3,481.7 L960.3,495.7 L938.9,515.2 L931.4,507.2 L953.9,481.7 Z" fill="#e8e8e8"/><path d="M960.3,488.7 L960.3,495.7 L938.9,515.2 L935.4,511.5 Z" fill="#bdbdbd"/><path d="M931.4,507.2 L938.9,515.2" stroke="#d9924a" stroke-width="1.600"/><path d="M931.4,507.2 L938.9,515.2 L928.9,522.2 L924.9,522.7 L925.4,518.7 Z" fill="url(#silver)"/><path d="M916.9,530.7 C923.9,537.7 929.9,527.7 937.9,531.7 C945.9,535.7 953.9,531.7 960.9,531.7" fill="none" stroke="url(#fade2)" stroke-width="9" stroke-linecap="round"/></g>
<g clip-path="url(#cc13)"><path d="M1020.3,481.7 L1020.3,495.7 L998.9,515.2 L991.4,507.2 L1013.9,481.7 Z" fill="#8a8a8a"/><path d="M1020.3,488.7 L1020.3,495.7 L998.9,515.2 L995.4,511.5 Z" fill="#a8a8a8"/><path d="M991.4,507.2 L998.9,515.2 L988.9,522.2 L984.9,522.7 L985.4,518.7 Z" fill="url(#silver)"/><path d="M978.9,530.7 C985.9,537.7 991.9,527.7 999.9,532.7 C1007.9,537.7 1013.9,527.7 1020.9,529.7" fill="none" stroke="#a2a2a2" stroke-width="9.500" stroke-linecap="round" opacity=".8"/></g>
<g clip-path="url(#cc20)"><path d="M840.0,544.7 L840.0,550.7 L828.6,559.7 L825.6,556.2 L836.6,544.7 Z" fill="#555"/><path d="M825.6,556.2 L828.6,559.7 L817.1,571.7 L812.6,567.2 Z" fill="#c8c8c8"/><path d="M827.1,557.9000000000001 L828.6,559.7 L817.1,571.7 L815.1,569.7 Z" fill="#8e8e8e"/><path d="M812.6,567.2 L817.1,571.7 C813.6,577.7 807.6,578.7 801.6,580.2 C804.6,576.7 806.1,570.7 812.6,567.2 Z" fill="#2a1414"/><path d="M 803.1,586.2 C 801.6,589.7 802.1,593.7 805.6,595.2 C 809.6,596.2 812.6,592.2 816.1,591.7 C 818.6,592.2 815.6,597.7 818.6,600.2 C 823.6,602.7 833.6,599.7 840.0,597.2 L 840.0,584.7 C 833.6,589.7 826.6,594.2 822.1,594.7 C 820.1,593.7 820.6,589.7 817.6,588.7 C 812.6,588.2 809.6,593.2 806.1,592.7 C 804.1,591.7 804.1,588.7 804.4,586.2 Z" fill="#383838"/></g>
<g clip-path="url(#cc21)"><path d="M900.3,544.7 L900.3,550.7 L888.9,559.7 L885.9,556.2 L896.9,544.7 Z" fill="#e79a2c"/><path d="M885.9,556.2 L888.9,559.7 L877.4,571.7 L872.9,567.2 Z" fill="#c8c8c8"/><path d="M887.4,557.9000000000001 L888.9,559.7 L877.4,571.7 L875.4,569.7 Z" fill="#8e8e8e"/><path d="M872.9,567.2 L877.4,571.7 C873.9,577.7 867.9,578.7 861.9,580.2 C864.9,576.7 866.4,570.7 872.9,567.2 Z" fill="#8a5a50"/><path d="M 863.4,586.2 C 861.9,589.7 862.4,593.7 865.9,595.2 C 869.9,596.2 872.9,592.2 876.4,591.7 C 878.9,592.2 875.9,597.7 878.9,600.2 C 883.9,602.7 893.9,599.7 900.3,597.2 L 900.3,584.7 C 893.9,589.7 886.9,594.2 882.4,594.7 C 880.4,593.7 880.9,589.7 877.9,588.7 C 872.9,588.2 869.9,593.2 866.4,592.7 C 864.4,591.7 864.4,588.7 864.7,586.2 Z" fill="url(#fade3)"/></g>
<g clip-path="url(#cc22)"><path d="M956.9,549.7 L958.9,553.7 L948.9,562.7 L945.4,559.2 L953.9,549.7 Z" fill="#a36a2c"/><path d="M945.4,559.2 L948.9,562.7 L936.9,572.7 L934.4,570.2 Z" fill="#dfe6ee"/><path d="M934.4,570.2 L936.9,572.7 L928.9,579.2 Z" fill="#1f4f86"/><path d="M 915.4,600.7 C 920.9,601.7 925.9,593.7 930.9,591.2 C 934.9,589.7 933.9,597.7 935.9,600.7 C 939.9,603.7 949.9,597.7 957.9,590.7" fill="none" stroke="url(#fade4)" stroke-width="1.900" stroke-linecap="round"/></g>
<g clip-path="url(#cc23)"><path d="M1020.3,545.7 L1020.3,563.7 L1001.9,577.7 L991.9,566.7 L1013.9,545.7 Z" fill="#2e78c4"/><path d="M1020.3,553.7 L1020.3,563.7 L1001.9,577.7 L997.9,573.2 Z" fill="#1f5fa4"/><path d="M991.9,566.7 L1001.9,577.7 L984.9,581.7 Z" fill="#e2b888"/><path d="M989.4,574.7 L992.4,579.7 L984.9,581.7 Z" fill="#444"/><path d="M977.9,584.7 l5,1 l-6,2 l7,1 l-6,2.500 l6,.5" fill="none" stroke="#222" stroke-width="1.600"/><path d="M983.9,599.7 l6,-8 M988.9,599.7 l7,-10 M993.9,598.7 l7,-11 M998.9,597.7 l7,-12 M1003.9,596.7 l7,-13 M1008.9,595.7 l7,-13 M1013.9,593.7 l6,-12" stroke="#9a9a9a" stroke-width="2.200" opacity=".8"/></g>
</svg></div>
    <div class="abs" style="left:1025px;top:472px;width:15px;height:134px;background:#3b3b3b"></div>
    <div class="abs" style="left:1025px;top:486px;width:15px;height:27px;background:#484848;border:1px solid #5c5c5c"></div>
    <!-- search -->
    <div class="abs" style="left:781px;top:608px;width:129px;height:23px;background:#393939;border:1px solid #303030;border-radius:3px"></div>
    <div class="t" style="left:785px;top:612.400px;color:#7c7c7c">搜索</div>
    <div class="abs" style="left:916px;top:614px;width:14px;height:14px;background:#303030;border-radius:2px"></div>
    <div class="t" style="left:935px;top:612.700px;color:#dedede">仅在当前标签内搜索</div>
    <svg id="docksvg" width="1042" height="666" viewBox="0 0 1042 666" style="left:0;top:0">
      <g fill="none" stroke="#d6d6d6" stroke-width="1.200"><circle cx="792" cy="125.8" r="7.600"/><path d="M789.1,126.39999999999999 V124.2 A2.700,2.700 0 0 1 794.5,124.2 V124.8"/></g><rect x="788" y="126.3" width="8" height="4" fill="#d6d6d6"/>
      <g fill="none" stroke="#dedede" stroke-width="1.200"><rect x="1004.600" y="119.6" width="8.200" height="8.200"/><path d="M1004.600,120.8 h8.200" stroke-width="1.800"/><rect x="999.400" y="124.8" width="8.200" height="8.200" fill="#494949"/><path d="M999.400,126.0 h8.200" stroke-width="1.800"/><path d="M1024.200,121.19999999999999 L1033.800,131.2 M1033.800,121.19999999999999 L1024.200,131.2" stroke-width="1.400"/></g>
      <g fill="none" stroke="#dedede"><rect x="782.600" y="139" width="15" height="14.600" stroke-width="1.200"/><path d="M782.600,139.800 h15" stroke-width="2.200"/><path d="M786,143 v8.600" stroke-width="1.800"/><path d="M788.800,143.800 h7.400 M788.800,147.400 h7.400 M788.800,151 h7.400" stroke-width="1.300"/></g>
      <defs><linearGradient id="trA" x1="0" y1="0" x2="1" y2="0"><stop offset="0" stop-color="#fff"/><stop offset="1" stop-color="#e00c0c"/></linearGradient><linearGradient id="trB" x1="0" y1="0" x2="0" y2="1"><stop offset="0" stop-color="#1a0000" stop-opacity="1"/><stop offset=".35" stop-color="#300" stop-opacity=".75"/><stop offset="1" stop-color="#400" stop-opacity="0"/></linearGradient></defs>
<path d="M900,143.600 L913.100,163.800 H887.800 Z" fill="url(#trA)"/><path d="M900,143.600 L913.100,163.800 H887.800 Z" fill="url(#trB)"/>
<circle cx="900" cy="139.800" r="4.200" fill="none" stroke="#e8e8e8" stroke-width="1.200"/><rect x="880.600" y="154.400" width="3.400" height="1.400" fill="#f0d0d8"/>
      <g fill="none" stroke="#d4d4d4" stroke-width="2.300"><path d="M782.5,221.1 A5.5,5.5 0 0 1 791.3,215.5"/><path d="M793.1,218.3 A5.5,5.5 0 0 1 784.3,223.9"/><path d="M789.600,217.800 L795,217.400 L794.400,212 Z" fill="#d4d4d4" stroke="none"/><path d="M786,221.600 L780.600,222 L781.200,227.400 Z" fill="#d4d4d4" stroke="none"/></g>
      <g fill="none" stroke="#c8c8c8" stroke-width="1.300"><circle cx="1029.800" cy="218" r="5.200"/><path d="M1026.200,214.400 L1033.400,221.600"/></g>
      <rect x="903" y="231" width="2" height="2" fill="#777"/>
      <rect x="906" y="231" width="2" height="2" fill="#777"/>
      <rect x="909" y="231" width="2" height="2" fill="#777"/>
      <rect x="912" y="231" width="2" height="2" fill="#777"/>
      <rect x="915" y="231" width="2" height="2" fill="#777"/>
      <rect x="918" y="231" width="2" height="2" fill="#777"/>
      <rect x="903" y="422" width="2" height="2" fill="#777"/>
      <rect x="906" y="422" width="2" height="2" fill="#777"/>
      <rect x="909" y="422" width="2" height="2" fill="#777"/>
      <rect x="912" y="422" width="2" height="2" fill="#777"/>
      <rect x="915" y="422" width="2" height="2" fill="#777"/>
      <rect x="918" y="422" width="2" height="2" fill="#777"/>
      <g fill="none" stroke="#d6d6d6" stroke-width="1.200"><circle cx="792" cy="244" r="7.600"/><path d="M789.1,244.6 V242.4 A2.700,2.700 0 0 1 794.5,242.4 V243"/></g><rect x="788" y="244.5" width="8" height="4" fill="#d6d6d6"/>
      <g fill="none" stroke="#dedede" stroke-width="1.200"><rect x="1004.600" y="237.8" width="8.200" height="8.200"/><path d="M1004.600,239.0 h8.200" stroke-width="1.800"/><rect x="999.400" y="243.0" width="8.200" height="8.200" fill="#494949"/><path d="M999.400,244.20000000000002 h8.200" stroke-width="1.800"/><path d="M1024.200,239.4 L1033.800,249.4 M1033.800,239.4 L1024.200,249.4" stroke-width="1.400"/></g>
      <path d="M992.2,267.8 h7.4 l-3.7,4.4z" fill="#a2a2a2"/>
      <path d="M1017.800,262 H1030.600 L1026,269.400 V277.600 L1022.400,275.400 V269.400 Z" fill="none" stroke="#dedede" stroke-width="1.300"/>
      <path d="M1032.2,279.6 h5 l-2.5,2.8z" fill="#9a9a9a"/>
      <path d="M995.3,299.4 h7 l-3.5,-4.2z" fill="#686868"/>
      <path d="M995.3,306.6 h7 l-3.5,4.2z" fill="#a8a8a8"/>
      <path d="M1018,298.200 h12.600 M1018,303.400 h12.600 M1018,308.600 h12.600" stroke="#e0e0e0" stroke-width="2"/>
      <path d="M1032.2,313 h5 l-2.5,2.8z" fill="#9a9a9a"/>
      <g fill="none"><path d="M784.7,334.5 C787.7,327.5 795.7,327.5 798.7,334.5" stroke="#e4e4e4" stroke-width="1.300"/><path d="M785.2,336.5 C788.7,341.5 794.7,341.5 798.2,336.5" stroke="#bdbdbd" stroke-width="1.200"/><circle cx="791.7" cy="334.0" r="3" fill="#cfcfcf"/></g>
      <g fill="none"><path d="M784.7,361.5 C787.7,354.5 795.7,354.5 798.7,361.5" stroke="#e4e4e4" stroke-width="1.300"/><path d="M785.2,363.5 C788.7,368.5 794.7,368.5 798.2,363.5" stroke="#bdbdbd" stroke-width="1.200"/><circle cx="791.7" cy="361.0" r="3" fill="#cfcfcf"/></g>
      <g fill="none"><path d="M784.700,390 C787.700,381.500 795.700,381.500 798.700,390" stroke="#e4e4e4" stroke-width="1.300"/><circle cx="791.700" cy="389" r="3" fill="#cfcfcf"/></g>
      <g fill="none" stroke="#e8eef6" stroke-width="1.200"><path d="M836.3,323.6 H842.9 V330.6 L840.3,333.20000000000005 H836.3 V330.6"/><path d="M833.3,324.1 L839.3,330.1" stroke-width="1.400"/></g>
      <g fill="none" stroke="#dcdcdc" stroke-width="1.200"><path d="M836.3,350.5 H842.9 V357.5 L840.3,360.1 H836.3 V357.5"/><path d="M833.3,351.0 L839.3,357.0" stroke-width="1.400"/></g>
      <g fill="none" stroke="#dcdcdc" stroke-width="1.200"><path d="M836.3,377.4 H842.9 V384.4 L840.3,387.0 H836.3 V384.4"/><path d="M833.3,377.9 L839.3,383.9" stroke-width="1.400"/></g>
      <g fill="#000"><rect x="818" y="331" width="2" height="2"/><rect x="821.500" y="334" width="1.600" height="2.400"/><rect x="823.600" y="337.500" width="2" height="1.600"/><rect x="817" y="336" width="1.500" height="1.500"/><rect x="822" y="329.500" width="1.400" height="1.400"/></g><g fill="#e8c8a0"><rect x="810" y="330" width="2" height="1.600"/><rect x="813" y="336" width="2" height="1.600"/><rect x="815.500" y="329" width="1.600" height="1.600"/><rect x="809" y="337.500" width="2" height="1.500"/></g>
      <rect x="971" y="333.1" width="11.500" height="7.500" fill="#7fa0c6"/><path d="M977.5,327.6 C980.5,327.1 982,329.6 982,333.1" fill="none" stroke="#7fa0c6" stroke-width="1.500"/>
      <rect x="971" y="359.9" width="11.500" height="7.500" fill="#7a7a7a"/><path d="M977.5,354.4 C980.5,353.9 982,356.4 982,359.9" fill="none" stroke="#7a7a7a" stroke-width="1.500"/>
      <rect x="1007" y="326.8" width="15.3" height="15.3" fill="#6d90b8"/><rect x="1012.1" y="326.8" width="5.1" height="5.1" fill="#8fb0d4"/><rect x="1007.0" y="331.9" width="5.1" height="5.1" fill="#8fb0d4"/><rect x="1017.2" y="331.9" width="5.1" height="5.1" fill="#8fb0d4"/><rect x="1012.1" y="337.0" width="5.1" height="5.1" fill="#8fb0d4"/>
      <rect x="1007" y="353.6" width="15.3" height="15.3" fill="#5e5e5e"/><rect x="1012.1" y="353.6" width="5.1" height="5.1" fill="#868686"/><rect x="1007.0" y="358.7" width="5.1" height="5.1" fill="#868686"/><rect x="1017.2" y="358.7" width="5.1" height="5.1" fill="#868686"/><rect x="1012.1" y="363.8" width="5.1" height="5.1" fill="#868686"/>
      <rect x="1007" y="380.500" width="15.300" height="8.500" fill="#5e5e5e"/><rect x="1012.100" y="380.500" width="5.100" height="5" fill="#868686"/><rect x="1007" y="385.500" width="5.100" height="3.500" fill="#868686"/><rect x="1017.200" y="385.500" width="5.100" height="3.500" fill="#868686"/>
      <path d="M972.600,389 V386.500 A4.200,4.200 0 0 1 981,386.500 V389" fill="none" stroke="#f0f0f0" stroke-width="1.700"/>
      <rect x="1027.500" y="321.500" width="12" height="12" fill="#444" stroke="#5a5a5a" stroke-width=".8"/><path d="M1029.8,329.6 h7.4 l-3.7,-4.4z" fill="#a2a2a2"/>
      <rect x="1027.500" y="376.500" width="12" height="12" fill="#444" stroke="#5a5a5a" stroke-width=".8"/><path d="M1029.8,380.4 h7.4 l-3.7,4.4z" fill="#a2a2a2"/>
      <path d="M795,396.200 V413.600 M786,404.900 H804" stroke="#e0e0e0" stroke-width="1.700"/>
      <path d="M812.4,403.4 h7.4 l-3.7,3.6z" fill="#8e8e8e"/>
      <g fill="none" stroke="#dedede" stroke-width="1.500"><rect x="833.400" y="395.600" width="15.400" height="14.800"/><path d="M829.800,399.600 V414 H844.800"/></g>
      <g fill="none" stroke="#dedede" stroke-width="1.800"><path d="M861,400.400 L871,409.800 L881,400.400"/><path d="M893,409.800 L903,400.400 L913,409.800"/></g>
      <g stroke="#dedede" stroke-width="1.500"><path d="M925.400,398.800 H945 M925.400,405 H945 M925.400,411.200 H945"/><path d="M939.400,396.800 v4 M929.800,403 v4 M935.600,409.200 v4" stroke-width="2"/></g>
      <g fill="#d6d6d6"><rect x="1016.600" y="398" width="16" height="2.200" rx=".6"/><rect x="1021.600" y="395.600" width="6" height="2.400" rx=".8"/><path d="M1017.800,401.200 H1031.400 V412.600 Q1031.400,414.600 1029.400,414.600 H1019.800 Q1017.800,414.600 1017.800,412.600 Z"/></g>
      <g fill="none" stroke="#d6d6d6" stroke-width="1.200"><circle cx="792" cy="434.6" r="7.600"/><path d="M789.1,435.20000000000005 V433.0 A2.700,2.700 0 0 1 794.5,433.0 V433.6"/></g><rect x="788" y="435.1" width="8" height="4" fill="#d6d6d6"/>
      <g fill="none" stroke="#dedede" stroke-width="1.200"><rect x="1004.600" y="428.6" width="8.200" height="8.200"/><path d="M1004.600,429.8 h8.200" stroke-width="1.800"/><rect x="999.400" y="433.8" width="8.200" height="8.200" fill="#494949"/><path d="M999.400,435.0 h8.200" stroke-width="1.800"/><path d="M1024.200,430.20000000000005 L1033.800,440.20000000000005 M1033.800,430.20000000000005 L1024.200,440.20000000000005" stroke-width="1.400"/></g>
      <path d="M921,455.6 h7.4 l-3.7,4.3z" fill="#a2a2a2"/>
      <path d="M943.400,450.200 H951 V464.200 L947.200,460.400 L943.400,464.200 Z" fill="none" stroke="#e0e0e0" stroke-width="1.500"/>
      <path d="M984.8,462.6 h5 l-2.5,2.8z" fill="#9a9a9a"/>
      <path d="M997.600,452.300 h12.800 M997.600,457.400 h12.800 M997.600,462.500 h12.800" stroke="#e0e0e0" stroke-width="2"/>
      <g fill="none" stroke="#dedede"><rect x="1020.400" y="449.400" width="15.600" height="15.200" stroke-width="1.200"/><path d="M1028.200,449.400 v7" stroke-width="1.600" stroke-dasharray="1.400 1.200"/></g>
      <rect x="1025.500" y="472.500" width="14" height="12.500" fill="#444" stroke="#5a5a5a" stroke-width=".8"/><path d="M1028.6,481 h8 l-4.0,-4.6z" fill="#a2a2a2"/>
      <rect x="1025.500" y="594" width="14" height="12.500" fill="#444" stroke="#5a5a5a" stroke-width=".8"/><path d="M1028.6,598 h8 l-4.0,4.6z" fill="#a2a2a2"/>
      <path d="M919,620.600 L922,625 L927.400,616" fill="none" stroke="#f0f0f0" stroke-width="1.800"/>
    </svg>
  </div>
  <!-- STATUS BAR -->
  <div id="status">
    <div class="t" style="left:38px;top:641.400px;font-size:12.500px;color:#d8d8d8">b) Ba...tails</div>
    <div class="t" style="left:124px;top:641.400px;font-size:12.500px;color:#d8d8d8">RGB/透明...rc.icc</div>
    <div class="abs" style="left:531px;top:638px;width:147px;height:24px;background:#424242;border:1px solid #5a5a5a;border-radius:2px"></div>
    <div class="t" style="left:536px;top:641.400px;font-size:12.500px;color:#dcdcdc">2,480 <u>x</u> 3,508 (34.6 MiB)</div>
    <div class="t" style="left:743px;top:641.400px;font-size:12.500px;color:#dcdcdc">0.00°</div>
    <div class="t" style="left:851px;top:641.400px;font-size:12.500px;color:#dcdcdc">100.0%</div>
    <svg width="1042" height="666" viewBox="0 0 1042 666" style="left:0;top:0">
      <rect x="8.500" y="641.500" width="14" height="14" fill="none" stroke="#dcdcdc" stroke-width="1.200"/>
      <circle cx="15.500" cy="648.500" r="4" fill="none" stroke="#dcdcdc" stroke-width="1.100" stroke-dasharray="1.100 1.400"/>
      <circle cx="697.500" cy="649.700" r="10.700" fill="#2e2e2e"/>
      <path d="M695,649.700 H708" stroke="#f0f0f0" stroke-width="1.300"/><circle cx="695" cy="649.700" r="1.500" fill="#f0f0f0"/><circle cx="708" cy="649.700" r="1.500" fill="#f0f0f0"/>
      <rect x="911" y="647" width="81" height="5" rx="2" fill="#363636" stroke="#303030" stroke-width=".8"/>
      <rect x="911" y="647" width="28" height="5" rx="2" fill="#73a2cf" stroke="#3d5f85" stroke-width=".8"/>
      <rect x="936.500" y="643.500" width="11.500" height="11.500" rx="2" fill="#555" stroke="#6e6e6e" stroke-width="1"/>
      <rect x="994.500" y="639" width="21" height="21" rx="2" fill="#3c3c3c" stroke="#333" stroke-width="1"/>
      <rect x="999.300" y="641.500" width="11.400" height="15" fill="none" stroke="#f0f0f0" stroke-width="1.300"/>
      <rect x="1002.600" y="646" width="5" height="5" fill="#333" stroke="#f0f0f0" stroke-width="1.300"/>
      <g fill="#7f95b4"><rect x="1037" y="652" width="2" height="2"/><rect x="1034" y="655" width="2" height="2"/><rect x="1037" y="655" width="2" height="2"/><rect x="1031" y="658" width="2" height="2"/><rect x="1034" y="658" width="2" height="2"/><rect x="1037" y="658" width="2" height="2"/><rect x="1028" y="661" width="2" height="2"/><rect x="1031" y="661" width="2" height="2"/><rect x="1034" y="661" width="2" height="2"/><rect x="1037" y="661" width="2" height="2"/></g>
    </svg>
  </div>
<div class="abs" style="left:0;top:0;width:1042px;height:1px;background:#2a2f33"></div>
<div class="abs" style="left:0;top:0;width:1px;height:666px;background:linear-gradient(#1a1d20 0,#1a1d20 150px,#4e5a3c 150px,#4e5a3c 350px,#5a3c3c 350px,#4a2a2e 666px)"></div>
<div class="abs" style="left:1040.500px;top:0;width:1.500px;height:666px;background:linear-gradient(#1f2a38 0,#24405e 300px,#3a3040 600px,#2a3a5a 666px)"></div>
<div class="abs" style="left:0;top:663.600px;width:1042px;height:2.400px;background:linear-gradient(90deg,#55262c 0,#55262c 3%,#8a8a8a 3%,#8a8a8a 5%,#55262c 5%,#55262c 15%,#8a8a8a 15%,#8a8a8a 17%,#4e2a30 17%,#4e2a30 28%,#777 28%,#777 29%,#4e2a30 29%,#4e2a30 50%,#3a3a44 50%,#2f3c56 62%,#5a5236 70%,#2f3c56 78%,#4a4a3a 88%,#2f3c56 100%)"></div>
</div>
</body>
</html>
